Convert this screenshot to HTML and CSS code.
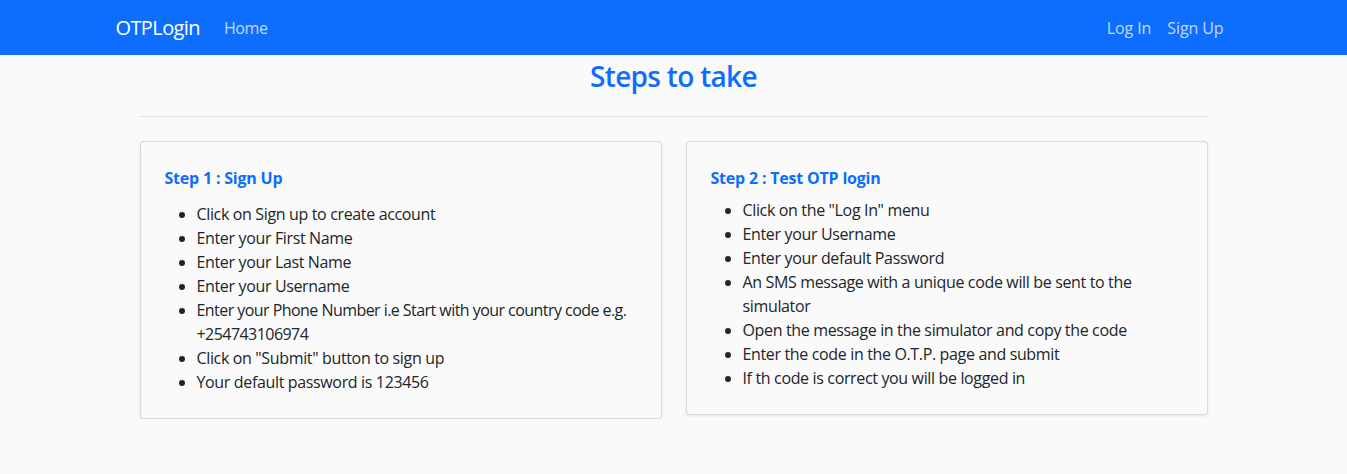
FILE: index.html
```html
<!DOCTYPE html>
<html lang="en">
<head>
<meta charset="utf-8">
<title>OTPLogin</title>
<link rel="stylesheet" href="styles.css">
</head>
<body>
<nav class="navbar">
  <div class="nav-inner">
    <div class="nav-left">
      <a class="brand" href="#">OTPLogin</a>
      <a class="nav-link" href="#">Home</a>
    </div>
    <div class="nav-right">
      <a class="nav-link wide" href="#">Log In</a>
      <a class="nav-link wide" href="#">Sign Up</a>
    </div>
  </div>
</nav>
<main class="main">
  <h3 class="title">Steps to take</h3>
  <hr class="rule">
  <div class="cards">
    <div class="card">
      <h6 class="card-title first">Step 1 : Sign Up</h6>
      <ul class="steps">
        <li>Click on Sign up to create account</li>
        <li>Enter your First Name</li>
        <li>Enter your Last Name</li>
        <li>Enter your Username</li>
        <li class="tight">Enter your Phone Number i.e Start with your country code e.g. +254743106974</li>
        <li>Click on "Submit" button to sign up</li>
        <li>Your default password is 123456</li>
      </ul>
    </div>
    <div class="card">
      <h6 class="card-title">Step 2 : Test OTP login</h6>
      <ul class="steps">
        <li>Click on the "Log In" menu</li>
        <li>Enter your Username</li>
        <li>Enter your default Password</li>
        <li>An SMS message with a unique code will be sent to the simulator</li>
        <li>Open the message in the simulator and copy the code</li>
        <li>Enter the code in the O.T.P. page and submit</li>
        <li>If th code is correct you will be logged in</li>
      </ul>
    </div>
  </div>
</main>
</body>
</html>
```
FILE: styles.css
```css
* { box-sizing: border-box; }
body {
  margin: 0;
  background: #fafafa;
  color: #212529;
  font-family: "Open Sans", "Noto Sans", sans-serif;
  font-size: 16px;
  line-height: 1.5;
  letter-spacing: -0.35px;
}
a { text-decoration: none; }
.navbar {
  background: #0d6efd;
  height: 55px;
  display: flex;
  align-items: center;
}
.nav-inner {
  width: 1140px;
  margin: 0 auto;
  padding: 0 12px;
  display: flex;
  justify-content: space-between;
  align-items: center;
}
.nav-left, .nav-right { display: flex; align-items: center; }
.brand {
  color: #fff;
  font-size: 20px;
  line-height: 30px;
  margin-right: 16px;
  letter-spacing: -0.6px;
}
.nav-link {
  color: rgba(255, 255, 255, 0.75);
  padding: 8px;
  line-height: 24px;
  letter-spacing: -0.4px;
}
.nav-link.wide { letter-spacing: -0.1px; }
.main {
  width: 1068px;
  margin: 0 auto;
}
.title {
  margin: 0;
  padding-top: 5px;
  text-align: center;
  color: #0d6efd;
  font-size: 28px;
  font-weight: 600;
  line-height: 1.2;
  letter-spacing: -0.7px;
}
.rule {
  margin: 22px 0 24px;
  border: 0;
  border-top: 1px solid #dfdfdf;
}
.cards {
  display: grid;
  grid-template-columns: 1fr 1fr;
  gap: 24px;
  align-items: start;
}
.card {
  background: #fafafa;
  border: 1px solid rgba(0, 0, 0, 0.125);
  border-radius: 4px;
  box-shadow: 0 1px 3px rgba(0, 0, 0, 0.1);
  padding: 24px;
}
.card-title {
  margin: 0 0 8px;
  color: #0d6efd;
  font-size: 16px;
  font-weight: 700;
  line-height: 24px;
  letter-spacing: -0.2px;
}
.card-title.first { margin-bottom: 12px; }
.steps {
  margin: 0;
  padding-left: 32px;
}
.steps .tight { letter-spacing: -0.55px; }
```
